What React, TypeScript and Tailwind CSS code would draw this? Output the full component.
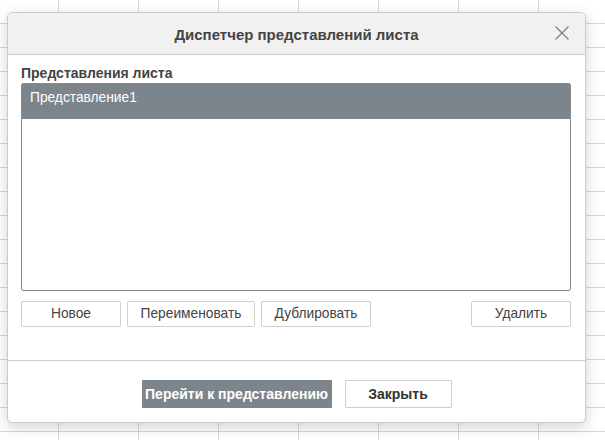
import React from "react";

function Btn({ w, children, className = "" }: { w: string; children: React.ReactNode; className?: string }) {
  return (
    <button
      className={`${w} h-[26px] rounded-[2px] border border-[#cfcfcf] bg-white text-[13.75px] leading-[16px] text-[#444] whitespace-nowrap ${className}`}
    >
      {children}
    </button>
  );
}

export default function App() {
  return (
    <div className="w-[605px] h-[440px] overflow-hidden bg-white bg-[linear-gradient(to_right,#d6d6d6_1px,transparent_1px),linear-gradient(to_bottom,#d6d6d6_1px,transparent_1px)] [background-size:80px_24px] [background-position:58px_23px] pt-[12px] pl-[7px] font-['Liberation_Sans',Arial,sans-serif]">
      <div className="w-[579px] h-[411px] flex flex-col rounded-[5px] border border-[#cbcbcb] bg-white shadow-[0_4px_14px_rgba(0,0,0,0.18)] overflow-hidden">
        {/* Header */}
        <div className="h-[42px] shrink-0 flex items-center justify-center relative bg-[#f1f1f1] border-b border-[#cbcbcb] rounded-t-[5px]">
          <span className="text-[15px] font-bold text-[#444] leading-[18px] mt-[2px]">Диспетчер представлений листа</span>
          <svg className="absolute right-[16px] top-[13px]" width="14" height="14" viewBox="0 0 14 14">
            <path d="M0.5 0.5 L13.5 13.5 M13.5 0.5 L0.5 13.5" stroke="#7a7a7a" strokeWidth="1.1" fill="none" />
          </svg>
        </div>
        {/* Body */}
        <div className="flex-1 flex flex-col pt-[10px] pl-[13px] pr-[14px]">
          <div className="text-[14px] leading-[16px] font-bold text-[#444] mb-[2px]">Представления листа</div>
          <div className="w-[550px] h-[208px] rounded-[2px] border border-[#8a8a8a] overflow-hidden">
            <div className="h-[35px] bg-[#7d858c] pl-[8px] pt-[6px] text-[13.75px] leading-[16px] text-white">Представление1</div>
          </div>
          <div className="flex gap-[6px] mt-[10px] w-[550px]">
            <Btn w="w-[100px]">Новое</Btn>
            <Btn w="w-[128px]">Переименовать</Btn>
            <Btn w="w-[110px]">Дублировать</Btn>
            <Btn w="w-[100px]" className="ml-auto">Удалить</Btn>
          </div>
        </div>
        {/* Footer */}
        <div className="h-[62px] shrink-0 border-t border-[#cbcbcb] flex justify-center gap-[13px] pt-[19px]">
          <button className="w-[190px] h-[28px] rounded-[1px] bg-[#7d858c] text-white text-[14px] font-bold leading-[16px] whitespace-nowrap">Перейти к представлению</button>
          <button className="w-[107px] h-[28px] rounded-[1px] border border-[#cfcfcf] bg-white text-[#333] text-[14px] font-bold leading-[16px]">Закрыть</button>
        </div>
      </div>
    </div>
  );
}
